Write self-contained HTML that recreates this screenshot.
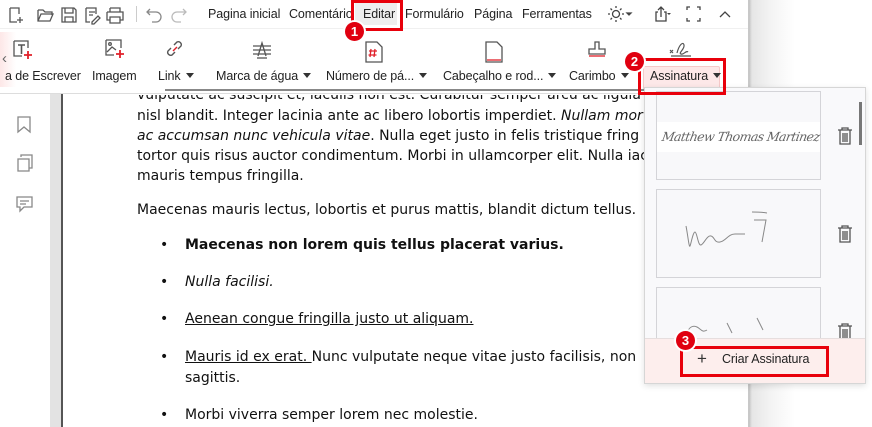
<!DOCTYPE html>
<html><head><meta charset="utf-8"><style>
*{margin:0;padding:0;box-sizing:border-box}
body{width:872px;height:427px;overflow:hidden;position:relative;background:#fff;font-family:"Liberation Sans",sans-serif;font-size:13px;color:#222}
.a{position:absolute;white-space:nowrap}
.m{font-size:12.5px;letter-spacing:-.1px}
.doc{font-family:"DejaVu Sans",sans-serif;font-size:14px;color:#111}
.tri{display:inline-block;width:0;height:0;border-left:4px solid transparent;border-right:4px solid transparent;border-top:5px solid #333;margin-left:5px;vertical-align:2px}
.red{position:absolute;border:3px solid #e8000b}
.badge{position:absolute;width:19px;height:19px;border-radius:50%;background:#e00010;color:#fff;font-weight:bold;font-size:13px;text-align:center;line-height:19px;box-shadow:0 0 0 2px #fff}
.card{position:absolute;left:656px;width:165px;border:1px solid #d4d4d8;background:#f8f8fa}
svg{position:absolute}
</style></head><body>
<div class="a" style="left:750px;top:0;width:122px;height:427px;background:linear-gradient(90deg,#cfcfcf 0,#e6e6e6 2px,#f3f3f3 20px,#fff 45px)"></div>
<svg style="left:8px;top:5px" width="120" height="20" fill="none" stroke="#555" stroke-width="1.3">
<path d="M2 3h9v6M2 3v14h7M12 12v6M9 15h6"/>
<path d="M30 5h5l2 2h7v3M30 5v11h12l3-7H33l-3 7"/>
<path d="M54 3h12l2 2v12H54zM57 3v5h8V3M57 17v-5h8v5"/>
<path d="M78 3h10v6M78 3v14h4M81 7h6M81 10h4M84 17l6-6 2 2-6 6h-2z"/>
<path d="M102 3h10v4M102 3v4M99 7h16v8h-3M99 7v8h3M102 12h10v6h-10z"/>
</svg>
<div class="a" style="left:136px;top:6px;width:1px;height:16px;background:#ccc"></div>
<svg style="left:146px;top:5px" width="44" height="20" fill="none" stroke="#888" stroke-width="1.3"><path d="M4 4L1 7l3 3M1 7h9a5 5 0 010 10H6"/><path d="M37 4l3 3-3 3M40 7h-9a5 5 0 000 10h4" stroke="#bbb"/></svg>
<div class="a m" style="left:208px;top:7px">Pagina inicial</div>
<div class="a m" style="left:289px;top:7px">Comentário</div>
<div class="a" style="left:355px;top:1px;width:42px;height:24px;background:#eee"></div>
<div class="a m" style="left:363px;top:7px">Editar</div>
<div class="a m" style="left:405px;top:7px">Formulário</div>
<div class="a m" style="left:474px;top:7px">Página</div>
<div class="a m" style="left:522px;top:7px">Ferramentas</div>
<svg style="left:608px;top:4px" width="130" height="20" fill="none" stroke="#444" stroke-width="1.3">
<circle cx="8" cy="10" r="3.5"/><path d="M8 2v2M8 16v2M0 10h2M14 10h2M2.5 4.5l1.5 1.5M12 14l1.5 1.5M2.5 15.5L4 14M12 6l1.5-1.5"/>
<path d="M19 9h4l-2 2z" fill="#444"/>
<path d="M50 8h-2v9h10V8h-2M53 13V3M50 6l3-3 3 3"/><path d="M59 9h4l-2 2z" fill="#444" stroke="none"/>
<path d="M79 6V3h3M89 3h3v3M92 14v3h-3M82 17h-3v-3"/>
<path d="M112 13l5-5 5 5"/>
</svg>
<div class="a" style="left:0;top:28px;width:750px;height:1px;background:#f0f0f0"></div>
<div class="a" style="left:0;top:32px;width:16px;height:55px;background:linear-gradient(90deg,#fde7e7,#fff)"></div>
<div class="a" style="left:2px;top:50px;color:#666;font-size:15px">‹</div>
<svg style="left:12px;top:39px" width="22" height="22" fill="none" stroke="#555" stroke-width="1.3"><path d="M2 2h14v7M2 2v15h8"/><path d="M6 6h7M9.5 6v9" stroke-width="1.6"/><path d="M16 12v8M12 16h8" stroke="#e0202a" stroke-width="1.8"/></svg>
<svg style="left:104px;top:38px" width="22" height="22" fill="none" stroke="#555" stroke-width="1.3"><path d="M2 2h15v8M2 2v15h8"/><circle cx="6" cy="6" r="1.3"/><path d="M3 14l5-5 4 3"/><path d="M16 12v8M12 16h8" stroke="#e0202a" stroke-width="1.8"/></svg>
<svg style="left:165px;top:39px" width="22" height="22" fill="none" stroke="#555" stroke-width="1.4"><path d="M9 6l3-3a3 3 0 014 4l-3 3M10 13l-3 3a3 3 0 01-4-4l3-3"/><path d="M8 12l4-4" stroke="#e0202a"/></svg>
<svg style="left:250px;top:39px" width="24" height="22" fill="none" stroke="#555" stroke-width="1.3"><path d="M3 7h18M3 11h18M3 15h18"/><path d="M8 17L12 4l4 13"/><path d="M7 19h10"/></svg>
<svg style="left:364px;top:40px" width="20" height="24" fill="none" stroke="#555" stroke-width="1.3"><path d="M2 2h11l5 5v15H2z"/><path d="M7 9l-1 8M11 9l-1 8M5 11h8M4.5 15h8" stroke="#e0202a"/></svg>
<svg style="left:484px;top:40px" width="20" height="24" fill="none" stroke="#555" stroke-width="1.3"><path d="M2 2h11l5 5v15H2z"/><path d="M3 20h14" stroke="#e0202a"/></svg>
<svg style="left:586px;top:40px" width="22" height="22" fill="none" stroke="#555" stroke-width="1.3"><path d="M9 2h4v7h6v5H3V9h6z"/><path d="M3 16h16" stroke="#e0202a"/></svg>
<svg style="left:668px;top:40px" width="26" height="22" fill="none" stroke="#555" stroke-width="1.2"><path d="M2 10l3 3M5 10l-3 3M9 13c2-8 6-12 7-8s-6 8-3 9 5-4 7-2M3 16h20"/></svg>
<div class="a m" style="left:5px;top:69px">a de Escrever</div>
<div class="a m" style="left:92px;top:69px">Imagem</div>
<div class="a m" style="left:158px;top:69px">Link<span class="tri"></span></div>
<div class="a m" style="left:216px;top:69px">Marca de água<span class="tri"></span></div>
<div class="a m" style="left:326px;top:69px">Número de pá...<span class="tri"></span></div>
<div class="a m" style="left:443px;top:69px">Cabeçalho e rod...<span class="tri"></span></div>
<div class="a m" style="left:569px;top:69px">Carimbo<span class="tri"></span></div>
<div class="a" style="left:643px;top:66px;width:77px;height:24px;background:#fde8e8;border:1px solid #f5c9c9;border-radius:2px"></div>
<div class="a m" style="left:650px;top:69px">Assinatura<span class="tri"></span></div>
<div class="a" style="left:165px;top:89px;width:585px;height:2px;background:#888"></div>
<div class="a" style="left:0;top:93px;width:750px;height:1px;background:#ddd"></div>
<div class="a" style="left:50px;top:94px;width:11px;height:333px;background:#e3e3e3"></div>
<div class="a" style="left:61px;top:94px;width:2px;height:333px;background:#555"></div>
<div class="a" style="left:748px;top:0;width:2px;height:427px;background:#c8c8c8"></div>
<svg style="left:15px;top:115px" width="22" height="100" fill="none" stroke="#888" stroke-width="1.3"><path d="M3 2h12v15l-6-5-6 5z"/><path d="M6 42V40h11v13h-3M3 44h11v12H3z"/><path d="M2 82h15v10H9l-4 4v-4H2zM5 86h9M5 89h6"/></svg>
<div class="doc">
<div class="a" style="left:137px;top:87px;clip-path:inset(8px 0 0 0)">vulputate ac suscipit et, iaculis non est. Curabitur semper arcu ac ligula</div>
<div class="a" style="left:137px;top:108px">nisl blandit. Integer lacinia ante ac libero lobortis imperdiet. <i>Nullam mor</i></div>
<div class="a" style="left:137px;top:128px"><i>ac accumsan nunc vehicula vitae</i>. Nulla eget justo in felis tristique fring</div>
<div class="a" style="left:137px;top:148px">tortor quis risus auctor condimentum. Morbi in ullamcorper elit. Nulla iac</div>
<div class="a" style="left:137px;top:168px">mauris tempus fringilla.</div>
<div class="a" style="left:137px;top:202px">Maecenas mauris lectus, lobortis et purus mattis, blandit dictum tellus.</div>
<div class="a" style="left:160px;top:237px">•</div><div class="a" style="left:185px;top:237px"><b>Maecenas non lorem quis tellus placerat varius.</b></div>
<div class="a" style="left:160px;top:274px">•</div><div class="a" style="left:185px;top:274px"><i>Nulla facilisi.</i></div>
<div class="a" style="left:160px;top:311px">•</div><div class="a" style="left:185px;top:311px"><u>Aenean congue fringilla justo ut aliquam. </u></div>
<div class="a" style="left:160px;top:349px">•</div><div class="a" style="left:185px;top:349px"><u>Mauris id ex erat. </u>Nunc vulputate neque vitae justo facilisis, non</div>
<div class="a" style="left:185px;top:370px">sagittis.</div>
<div class="a" style="left:160px;top:407px">•</div><div class="a" style="left:185px;top:407px">Morbi viverra semper lorem nec molestie.</div>
</div>
<div class="a" style="left:644px;top:87px;width:222px;height:297px;background:#f9f9fb;border:1px solid #d6d6d6;box-shadow:0 2px 6px rgba(0,0,0,.12)"></div>
<div class="card" style="top:91px;height:89px"><div class="a" style="left:0;top:30px;width:163px;height:30px;background:#fff"></div><div class="a" style="left:5px;top:37px;font-family:'DejaVu Serif',serif;font-style:italic;font-size:12.5px;color:#666;letter-spacing:-.6px;transform:skewX(-10deg)">Matthew Thomas Martinez</div></div>
<div class="card" style="top:189px;height:89px"><svg style="left:25px;top:18px" width="110" height="45" fill="none" stroke="#888" stroke-width="1"><path d="M4 18c2 10 3 22 4 20s3-14 5-14 3 14 6 13 6-10 10-9 3 7 9 6 8-8 15-8h10M70 4c4 0 10 0 15 1M72 12h12l-4 22"/></svg></div>
<div class="card" style="top:287px;height:52px;border-bottom:none"><svg style="left:25px;top:20px" width="110" height="30" fill="none" stroke="#888" stroke-width="1"><path d="M5 25c2-6 6-8 10-6s5 6 10 3M45 15l5 10M75 10l6 12"/></svg></div>
<svg style="left:836px;top:126px" width="18" height="220" fill="none" stroke="#555" stroke-width="1.3"><path d="M2 4h14M6 4V2h6v2M4 4v14h10V4M7 7v9M9 7v9M11 7v9"/><g transform="translate(0,98)"><path d="M2 4h14M6 4V2h6v2M4 4v14h10V4M7 7v9M9 7v9M11 7v9"/></g><g transform="translate(0,196)"><path d="M2 4h14M6 4V2h6v2M4 4v14h10V4M7 7v9M9 7v9M11 7v9"/></g></svg>
<div class="a" style="left:859px;top:102px;width:3px;height:43px;background:#777"></div>
<div class="a" style="left:645px;top:338px;width:220px;height:45px;background:#fdeeed;border-top:1px solid #e6dede"></div>
<div class="a" style="left:697px;top:349px;font-size:17px;color:#333">+</div>
<div class="a m" style="left:722px;top:352px;color:#222">Criar Assinatura</div>
<div class="red" style="left:351px;top:0;width:52px;height:31px"></div>
<div class="badge" style="left:345px;top:22px">1</div>
<div class="red" style="left:638px;top:58px;width:88px;height:37px"></div>
<div class="badge" style="left:625px;top:52px">2</div>
<div class="red" style="left:680px;top:346px;width:149px;height:31px"></div>
<div class="badge" style="left:676px;top:331px">3</div>
</body></html>
